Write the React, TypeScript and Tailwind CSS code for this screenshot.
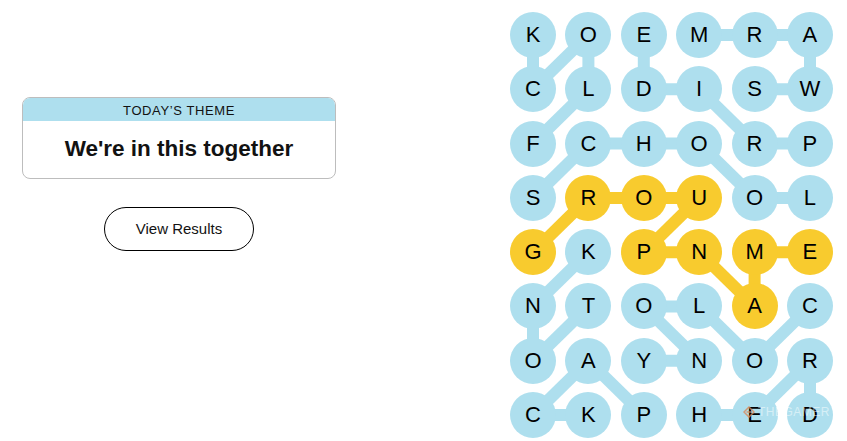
import React from "react";

const GRID = [
  "KOEMRA",
  "CLDISW",
  "FCHORP",
  "SROUOL",
  "GKPNME",
  "NTOLAC",
  "OAYNOR",
  "CKPHED",
];

const BLUE = "#aedfee";
const YELLOW = "#f8cb2e";

const blueEdges: [number, number, number, number][] = [
  [0, 0, 1, 0], [0, 1, 1, 0], [0, 1, 1, 1], [0, 2, 1, 2], [0, 3, 0, 4],
  [0, 4, 0, 5], [0, 5, 1, 5], [1, 4, 1, 5], [1, 2, 1, 3], [1, 3, 2, 4],
  [1, 1, 2, 0], [2, 1, 2, 2], [2, 2, 2, 3], [2, 4, 2, 5], [2, 1, 3, 0],
  [2, 3, 3, 4], [3, 4, 3, 5], [4, 1, 5, 0], [5, 0, 6, 0], [5, 1, 6, 0],
  [5, 2, 5, 3], [5, 2, 6, 3], [5, 3, 6, 4], [5, 5, 6, 4], [6, 2, 6, 3],
  [6, 1, 7, 0], [7, 0, 7, 1], [6, 1, 7, 2], [6, 5, 7, 4], [6, 5, 7, 5],
  [7, 3, 7, 4],
];

const yellowEdges: [number, number, number, number][] = [
  [4, 0, 3, 1], [3, 1, 3, 2], [3, 2, 3, 3], [3, 3, 4, 2], [4, 2, 4, 3],
  [4, 3, 5, 4], [5, 4, 4, 4], [4, 4, 4, 5],
];

const yellowCells = new Set(["4-0", "3-1", "3-2", "3-3", "4-2", "4-3", "5-4", "4-4", "4-5"]);

const D = 46;
const GX = 9.4;
const GY = 8.3;
const cx = (c: number) => D / 2 + c * (D + GX);
const cy = (r: number) => D / 2 + r * (D + GY);

export default function App() {
  return (
    <div
      className="w-[847px] h-[441px] bg-white flex overflow-hidden"
      style={{ fontFamily: '"Liberation Sans", Arial, sans-serif' }}
    >
      <div className="w-[358px] pl-[22px] pr-[22px] pt-[97px] flex flex-col items-center">
        <div className="w-[314px] border border-[#bdbdbd] rounded-[8px] overflow-hidden">
          <div className="h-[23px] bg-[#aedfee] flex items-center justify-center text-[13px] leading-none tracking-[0.6px] text-[#121212] uppercase pt-[1px]">
            Today’s Theme
          </div>
          <div className="h-[57px] flex items-center justify-center text-[22.5px] font-bold text-[#121212] pb-[2px]">
            We're in this together
          </div>
        </div>
        <button className="mt-[28px] w-[150px] h-[44px] rounded-full border border-black bg-white text-[15px] text-[#121212] flex items-center justify-center">
          View Results
        </button>
      </div>
      <div className="ml-[152px] mt-[12px] relative">
        <svg
          className="absolute left-0 top-0"
          width={6 * D + 5 * GX}
          height={8 * D + 7 * GY}
        >
          {blueEdges.map(([r1, c1, r2, c2], i) => (
            <line
              key={"b" + i}
              x1={cx(c1)}
              y1={cy(r1)}
              x2={cx(c2)}
              y2={cy(r2)}
              stroke={BLUE}
              strokeWidth={12}
            />
          ))}
          {yellowEdges.map(([r1, c1, r2, c2], i) => (
            <line
              key={"y" + i}
              x1={cx(c1)}
              y1={cy(r1)}
              x2={cx(c2)}
              y2={cy(r2)}
              stroke={YELLOW}
              strokeWidth={12}
            />
          ))}
        </svg>
        <div className="relative grid grid-cols-[repeat(6,46px)] gap-x-[9.4px] gap-y-[8.3px]">
          {GRID.map((row, r) =>
            row.split("").map((ch, c) => (
              <div
                key={r + "-" + c}
                className={
                  "w-[46px] h-[46px] rounded-full flex items-center justify-center text-[22px] text-black leading-none " +
                  (yellowCells.has(r + "-" + c) ? "bg-[#f8cb2e]" : "bg-[#aedfee]")
                }
              >
                {ch}
              </div>
            ))
          )}
        </div>
        <div className="absolute left-[233px] top-[391px] flex items-center gap-[3px] text-[12px] tracking-[0.5px] text-white/50 pointer-events-none">
          <svg width="12" height="12" viewBox="0 0 12 12">
            <path d="M6 1 L11 6 L6 11 L1 6 Z" fill="none" stroke="#d98a5a" strokeWidth="1.5" opacity="0.8" />
            <path d="M3.5 6 H8.5" stroke="#d98a5a" strokeWidth="1.5" opacity="0.8" />
          </svg>
          <span>THEGAMER</span>
        </div>
      </div>
    </div>
  );
}
